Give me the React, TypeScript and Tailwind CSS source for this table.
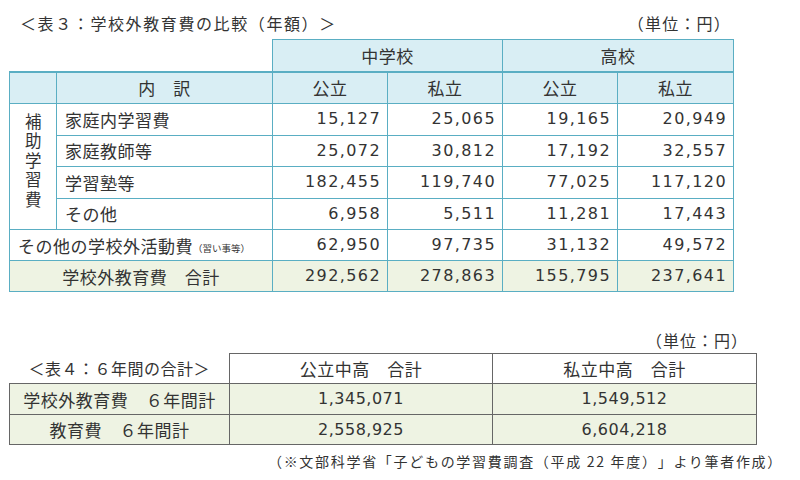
import React from 'react';

const jp = "[font-family:'Noto_Sans_CJK_JP','Noto_Sans',sans-serif]";
const digits = "[font-family:'DejaVu_Sans','Noto_Sans_CJK_JP',sans-serif] text-[16px]";

const rows = [
  { label: '家庭内学習費', v: ['15,127', '25,065', '19,165', '20,949'] },
  { label: '家庭教師等', v: ['25,072', '30,812', '17,192', '32,557'] },
  { label: '学習塾等', v: ['182,455', '119,740', '77,025', '117,120'] },
  { label: 'その他', v: ['6,958', '5,511', '11,281', '17,443'] },
];

const other = ['62,950', '97,735', '31,132', '49,572'];
const total = ['292,562', '278,863', '155,795', '237,641'];

const td = 'border border-[#5aaec3] px-[8px]';
const num = `border border-[#5aaec3] pl-[8px] pr-[6px] text-right ${digits} tracking-[1.4px]`;
const cell4 = 'border border-[#666] text-center';

const App: React.FC = () => {
  return (
    <div className={`w-[800px] h-[480px] bg-white text-[#333] ${jp} [text-spacing-trim:space-all] overflow-hidden`}>
      {/* table 3 */}
      <div className="pl-[9px] pt-[11px] w-[733px]">
        <div className="flex justify-between items-center h-[24px] pl-[11px] text-[16px] leading-none">
          <span className="tracking-[1.6px]">＜表３：学校外教育費の比較（年額）＞</span>
          <span className="pr-[2px] tracking-[1.2px]">（単位：円）</span>
        </div>
        <table className="mt-[4px] border-collapse table-fixed w-[724px] text-[17px] leading-none tracking-[0.5px]">
          <colgroup>
            <col className="w-[47px]" />
            <col className="w-[216px]" />
            <col className="w-[115px]" />
            <col className="w-[115px]" />
            <col className="w-[115px]" />
            <col className="w-[116px]" />
          </colgroup>
          <tbody>
            <tr className="h-[32px]">
              <td colSpan={2} />
              <td colSpan={2} className={`${td} bg-[#d9eef4] text-center`}>中学校</td>
              <td colSpan={2} className={`${td} bg-[#d9eef4] text-center`}>高校</td>
            </tr>
            <tr className="h-[32px]">
              <td className={`${td} border-t-2 bg-[#d9eef4]`} />
              <td className={`${td} border-t-2 bg-[#d9eef4] text-center`}>内　訳</td>
              <td className={`${td} border-t-2 bg-[#d9eef4] text-center`}>公立</td>
              <td className={`${td} border-t-2 bg-[#d9eef4] text-center`}>私立</td>
              <td className={`${td} border-t-2 bg-[#d9eef4] text-center`}>公立</td>
              <td className={`${td} border-t-2 bg-[#d9eef4] text-center`}>私立</td>
            </tr>
            {rows.map((r, i) => (
              <tr key={r.label} className="h-[31.5px]">
                {i === 0 && (
                  <td rowSpan={4} className={`${td} px-0 text-center align-middle`}>
                    <div className="flex justify-center pb-[10px]">
                      <span className="[writing-mode:vertical-rl] text-[16.5px] leading-none tracking-[3px]">補助学習費</span>
                    </div>
                  </td>
                )}
                <td className={td}>{r.label}</td>
                {r.v.map((v, j) => (
                  <td key={j} className={num}>{v}</td>
                ))}
              </tr>
            ))}
            <tr className="h-[31px]">
              <td colSpan={2} className={`${td} whitespace-nowrap`}>
                その他の学校外活動費<span className="text-[9.5px] align-middle tracking-normal">（習い事等）</span>
              </td>
              {other.map((v, j) => (
                <td key={j} className={num}>{v}</td>
              ))}
            </tr>
            <tr className="h-[31px] bg-[#eef3e3]">
              <td colSpan={2} className={`${td} text-center`}>学校外教育費　合計</td>
              {total.map((v, j) => (
                <td key={j} className={num}>{v}</td>
              ))}
            </tr>
          </tbody>
        </table>
      </div>

      {/* table 4 */}
      <div className="pl-[9px] pt-[40px] w-[756px]">
        <div className="flex justify-end h-[21px] text-[16px] leading-none pr-[8px] tracking-[1px]">
          <span>（単位：円）</span>
        </div>
        <table className="border-collapse table-fixed w-[747px] text-[17px] leading-none tracking-[0.5px]">
          <colgroup>
            <col className="w-[220px]" />
            <col className="w-[263px]" />
            <col className="w-[264px]" />
          </colgroup>
          <tbody>
            <tr className="h-[30px]">
              <td className="text-center border-b border-[#666] text-[16px]">＜表４：６年間の合計＞</td>
              <td className={cell4}>公立中高　合計</td>
              <td className={cell4}>私立中高　合計</td>
            </tr>
            <tr className="h-[31px] bg-[#eef3e3]">
              <td className={cell4}>学校外教育費　６年間計</td>
              <td className={`${cell4} ${digits}`}>1,345,071</td>
              <td className={`${cell4} ${digits}`}>1,549,512</td>
            </tr>
            <tr className="h-[30px] bg-[#eef3e3]">
              <td className={cell4}>教育費　６年間計</td>
              <td className={`${cell4} ${digits}`}>2,558,925</td>
              <td className={`${cell4} ${digits}`}>6,604,218</td>
            </tr>
          </tbody>
        </table>
        <div className="flex justify-end mt-[9px] text-[14px] leading-none w-[774px] tracking-[1.7px]">
          <span>（※文部科学省「子どもの学習費調査（平成 22 年度）」より筆者作成）</span>
        </div>
      </div>
    </div>
  );
};

export default App;
